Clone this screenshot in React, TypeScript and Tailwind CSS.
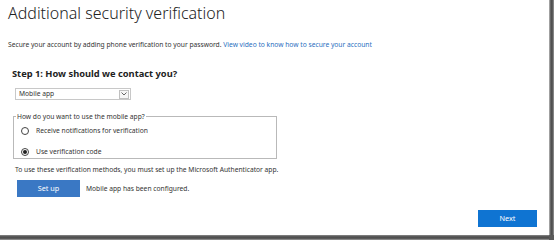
import React from "react";

const font = { fontFamily: '"Noto Sans", "Open Sans", "Liberation Sans", sans-serif' };

function Radio({ checked }: { checked?: boolean }) {
  return (
    <span className="flex h-[8px] w-[8px] items-center justify-center rounded-full border border-[#444] bg-white">
      {checked && <span className="h-[4px] w-[4px] rounded-full bg-[#222]" />}
    </span>
  );
}

export default function App() {
  return (
    <div className="grid h-[240px] w-[554px] grid-cols-[549px_5px] grid-rows-[235px_5px] bg-white" style={font}>
      <div className="flex flex-col bg-white text-[#333]">
        <h1 className="ml-[8px] mt-[2px] text-[16px] font-light leading-[22px] text-[#222]">
          Additional security verification
        </h1>
        <p className="ml-[8px] mt-[16px] text-[6.7px] leading-[10px] text-[#333]">
          Secure your account by adding phone verification to your password.{" "}
          <span className="text-[#2a6fc0]">View video to know how to secure your account</span>
        </p>
        <h2 className="ml-[12px] mt-[18px] text-[9.3px] font-bold leading-[12px] text-[#222]">
          Step 1: How should we contact you?
        </h2>
        <div className="ml-[15px] mt-[8px] flex h-[12px] w-[116px] items-center justify-between border border-[#c8c8c8] bg-white pl-[3px] pr-[1px]">
          <span className="text-[6.7px] leading-[10px] text-[#333]">Mobile app</span>
          <span className="flex h-[9px] w-[10px] items-center justify-center border border-[#c0c0c0] bg-[#f6f6f6]">
            <svg width="6" height="4" viewBox="0 0 6 4">
              <path d="M0.5 0.5 L3 3 L5.5 0.5" fill="none" stroke="#666" strokeWidth="1" />
            </svg>
          </span>
        </div>
        <fieldset className="ml-[13px] mt-[12px] h-[47px] w-[264px] border border-[#b9b9b9] pl-[5px] pr-0 pb-0 pt-0">
          <legend className="ml-[-3px] px-[1px] text-[6.7px] leading-[9px] text-[#333]">
            How do you want to use the mobile app?
          </legend>
          <div className="mt-[5px] flex items-center gap-[7px] pl-[2px]">
            <Radio />
            <span className="text-[6.7px] leading-[10px] text-[#333]">Receive notifications for verification</span>
          </div>
          <div className="mt-[11px] flex items-center gap-[7px] pl-[2px]">
            <Radio checked />
            <span className="text-[6.7px] leading-[10px] text-[#333]">Use verification code</span>
          </div>
        </fieldset>
        <p className="ml-[15px] mt-[6px] text-[6.7px] leading-[10px] text-[#333]">
          To use these verification methods, you must set up the Microsoft Authenticator app.
        </p>
        <div className="ml-[17px] mt-[5px] flex items-center gap-[6px]">
          <div className="flex h-[17px] w-[63px] items-center justify-center bg-[#3a78c4] text-[7.3px] text-white">
            Set up
          </div>
          <span className="text-[6.7px] leading-[10px] text-[#333]">Mobile app has been configured.</span>
        </div>
        <div className="mr-[12px] mt-[13px] flex justify-end">
          <div className="flex h-[17px] w-[59px] items-center justify-center bg-[#0f74d2] text-[7.3px] text-white">
            Next
          </div>
        </div>
      </div>
      <div className="bg-[linear-gradient(to_right,#bdbdbd,#4a4a4a_40%,#5a5a5a_70%,#9a9a9a)]" />
      <div className="bg-[linear-gradient(to_bottom,#8a8a8a,#4a4a4a_40%,#5a5a5a_70%,#a0a0a0)]" />
      <div className="bg-[#5a5a5a]" />
    </div>
  );
}
